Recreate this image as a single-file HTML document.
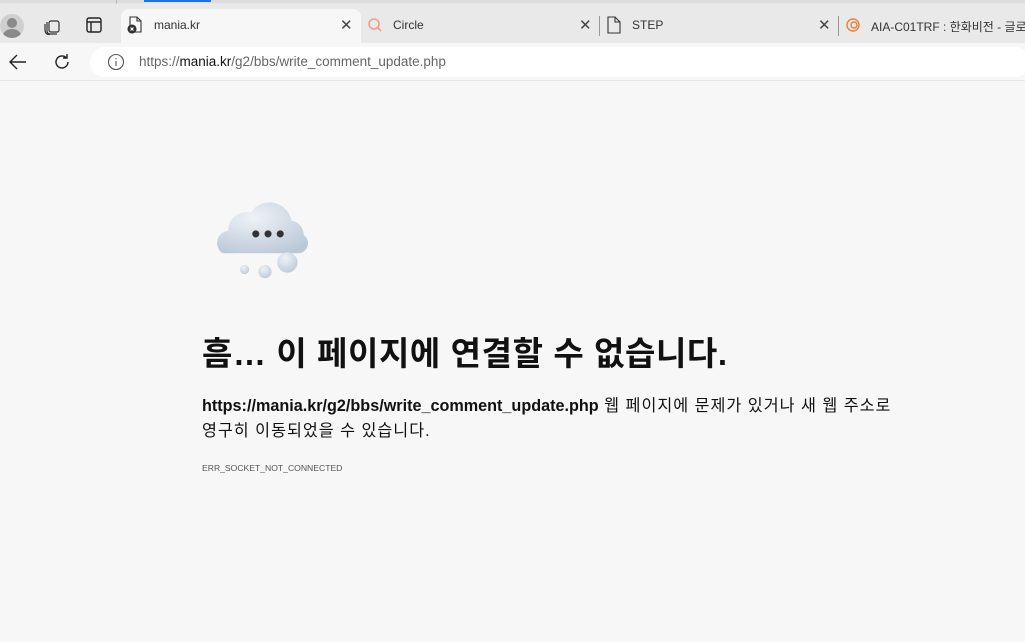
<!DOCTYPE html>
<html><head><meta charset="utf-8"><style>
*{margin:0;padding:0;box-sizing:border-box}
body{width:1025px;height:642px;overflow:hidden;background:#f7f7f7;font-family:"Liberation Sans","Noto Sans CJK KR",sans-serif;position:relative;color:#111}
.abs{position:absolute}
.tabbar{left:0;top:0;width:1025px;height:43px;background:#e9e9e9;border-top:3px solid #dcdcdc}
.tab{font-size:12px;color:#333}
.x{font-size:15px;color:#444}
.sep{width:1px;height:20px;background:#999;top:16px}
</style></head><body>
<div class="abs tabbar"></div>
<div class="abs" style="left:116px;top:0;width:1px;height:4px;background:#bbb"></div>
<div class="abs" style="left:144px;top:0;width:67px;height:2px;background:#1a73e8"></div>
<div class="abs" style="left:0;top:14px;width:24px;height:24px;border-radius:50%;background:#cfcfcf;overflow:hidden"><div class="abs" style="left:7px;top:4px;width:10px;height:10px;border-radius:50%;background:#8a8a8a"></div><div class="abs" style="left:3px;top:15px;width:18px;height:14px;border-radius:50%;background:#8a8a8a"></div></div>
<svg class="abs" style="left:43px;top:17px" width="18" height="18" viewBox="0 0 18 18" fill="none" stroke="#333" stroke-width="1.2"><rect x="6" y="4" width="10" height="11" rx="2"/><path d="M4 5v9a3 3 0 0 0 3 3h7M2 7v6a5 5 0 0 0 5 5"/></svg>
<svg class="abs" style="left:86px;top:17px" width="16" height="16" viewBox="0 0 16 16" fill="none" stroke="#222" stroke-width="1.4"><rect x="1" y="1" width="14" height="14" rx="2"/><path d="M1 5h14M5 5v10"/></svg>
<div class="abs" style="left:121px;top:9px;width:240px;height:34px;background:#f7f7f7;border-radius:8px 8px 0 0"></div>
<svg class="abs" style="left:127px;top:16px" width="16" height="18" viewBox="0 0 16 18" fill="none" stroke="#333" stroke-width="1.1"><path d="M3 1h7l4 4v11H3z M10 1v4h4"/><circle cx="5" cy="13" r="4" fill="#333"/><path d="M3.5 11.5l3 3M6.5 11.5l-3 3" stroke="#fff"/></svg>
<div class="abs tab" style="left:154px;top:18px">mania.kr</div>
<div class="abs x" style="left:340px;top:16px">✕</div>
<svg class="abs" style="left:367px;top:17px" width="16" height="16" viewBox="0 0 16 16" fill="none" stroke="#eaa08c" stroke-width="1.6"><circle cx="7" cy="7" r="5"/><path d="M11 11l3 3"/></svg>
<div class="abs tab" style="left:393px;top:18px">Circle</div>
<div class="abs x" style="left:579px;top:16px">✕</div>
<div class="abs sep" style="left:599px"></div>
<svg class="abs" style="left:607px;top:16px" width="14" height="18" viewBox="0 0 14 18" fill="none" stroke="#333" stroke-width="1.1"><path d="M1 1h7l5 5v11H1z M8 1v5h5"/></svg>
<div class="abs tab" style="left:632px;top:18px">STEP</div>
<div class="abs x" style="left:818px;top:16px">✕</div>
<div class="abs sep" style="left:838px"></div>
<svg class="abs" style="left:845px;top:17px" width="16" height="16" viewBox="0 0 16 16" fill="none" stroke="#ef7d3a" stroke-width="1.4"><circle cx="8" cy="8" r="6"/><circle cx="9" cy="8" r="3"/></svg>
<div class="abs tab" style="left:871px;top:18px;white-space:nowrap">AIA-C01TRF : 한화비전 - 글로</div>
<div class="abs" style="left:0;top:43px;width:1025px;height:38px;background:#f7f7f7;border-bottom:1px solid #e6e6e6"></div>
<svg class="abs" style="left:8px;top:53px" width="20" height="18" viewBox="0 0 20 18" fill="none" stroke="#222" stroke-width="1.4"><path d="M18 9H2M9 2L2 9l7 7"/></svg>
<svg class="abs" style="left:52px;top:52px" width="20" height="20" viewBox="0 0 20 20" fill="none" stroke="#222" stroke-width="1.4"><path d="M16 10a6 6 0 1 1-2-4.5M15 2v4h-4"/></svg>
<div class="abs" style="left:90px;top:47px;width:940px;height:30px;background:#fff;border-radius:15px"></div>
<svg class="abs" style="left:107px;top:53px" width="18" height="18" viewBox="0 0 18 18" fill="none" stroke="#555" stroke-width="1.1"><circle cx="9" cy="9" r="7.5"/><path d="M9 8v5M9 5v1.2"/></svg>
<div class="abs" style="left:139px;top:54px;font-size:13.5px;color:#666;white-space:nowrap">https://<span style="color:#111">mania.kr</span>/g2/bbs/write_comment_update.php</div>
<svg class="abs" style="left:212px;top:198px" width="110" height="84" viewBox="0 0 108 82">
<defs><radialGradient id="g" cx="40%" cy="30%" r="80%"><stop offset="0" stop-color="#eef2f7"/><stop offset="1" stop-color="#b9c7d6"/></radialGradient></defs>
<path d="M8 52a12 12 0 0 1 8-20 18 18 0 0 1 22-18 22 22 0 0 1 40 8 14 14 0 0 1 12 14 10 10 0 0 1-4 18H12a6 6 0 0 1-4-2z" fill="url(#g)"/>
<circle cx="43" cy="35" r="3.5" fill="#333"/><circle cx="55" cy="35" r="3.5" fill="#333"/><circle cx="67" cy="35" r="3.5" fill="#333"/>
<circle cx="74" cy="63" r="10" fill="url(#g)"/><circle cx="52" cy="72" r="6.5" fill="url(#g)"/><circle cx="32" cy="70" r="4.5" fill="url(#g)"/>
</svg>
<div class="abs" style="left:202px;top:327px;font-size:33px;font-weight:bold;white-space:nowrap;letter-spacing:0.6px">흠… 이 페이지에 연결할 수 없습니다.</div>
<div class="abs" style="left:202px;top:394px;font-size:16.2px;line-height:25px;white-space:nowrap;color:#111"><b>https://mania.kr/g2/bbs/write_comment_update.php</b><span style="letter-spacing:1px"> 웹 페이지에 문제가 있거나 새 웹 주소로<br>영구히 이동되었을 수 있습니다.</span></div>
<div class="abs" style="left:202px;top:463px;font-size:8.6px;color:#555">ERR_SOCKET_NOT_CONNECTED</div>
</body></html>
